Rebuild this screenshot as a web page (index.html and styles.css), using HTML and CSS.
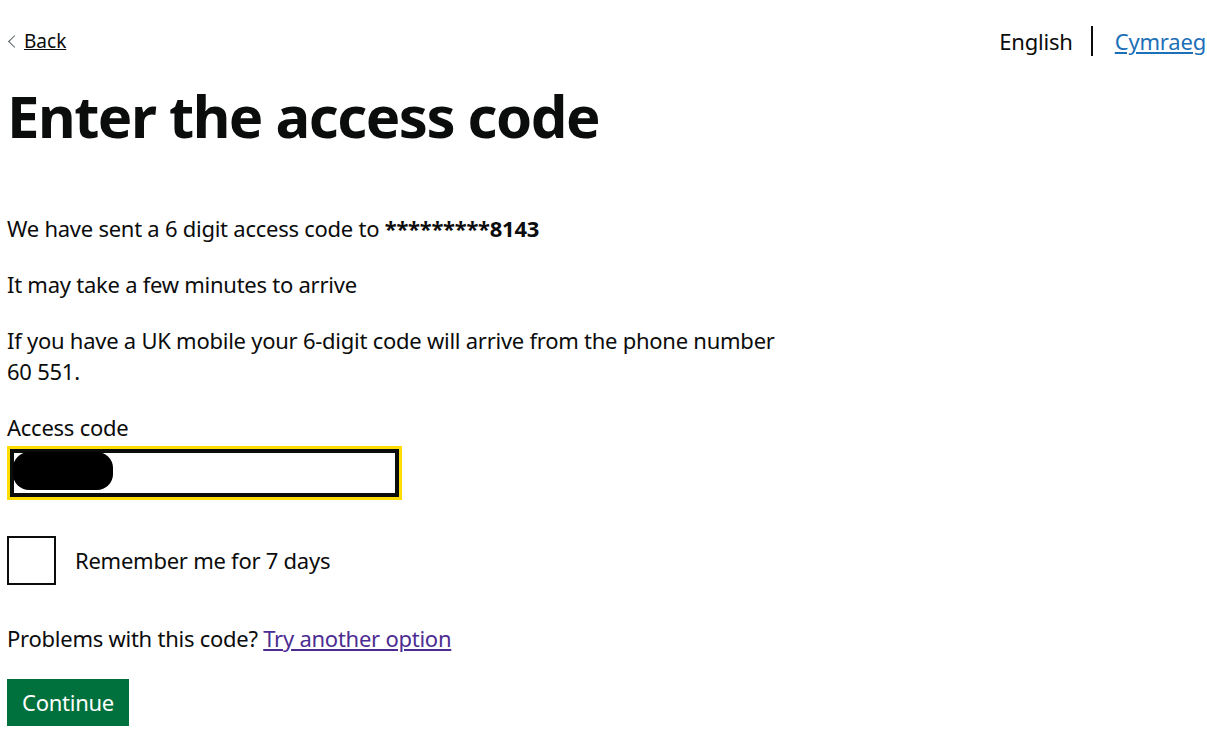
FILE: index.html
```html
<!DOCTYPE html>
<html lang="en">

<head>
    <meta charset="UTF-8">
    <meta name="viewport" content="width=device-width, initial-scale=1.0">
    <title>Enter the access code</title>
    <link rel="stylesheet" href="styles.css">
</head>

<body>
    <div class="page">
        <div class="top-bar">
            <a href="#" class="back-link">Back</a>
            <nav class="language-toggle">
                <ul>
                    <li class="current">English</li>
                    <li><a href="#">Cymraeg</a></li>
                </ul>
            </nav>
        </div>

        <main class="main-column">
            <h1>Enter the access code</h1>

            <p>We have sent a 6 digit access code to <strong>*********8143</strong></p>
            <p>It may take a few minutes to arrive</p>
            <p>If you have a UK mobile your 6-digit code will arrive from the phone number 60 551.</p>

            <form>
                <div class="form-group">
                    <label for="code" class="label">Access code</label>
                    <div class="input-wrap">
                        <span class="redacted"></span>
                        <input type="text" id="code" class="input">
                    </div>
                </div>

                <div class="checkbox">
                    <input type="checkbox" id="remember">
                    <label for="remember">Remember me for 7 days</label>
                </div>

                <p>Problems with this code? <a href="#" class="visited">Try another option</a></p>

                <button type="submit" class="button">Continue</button>
            </form>
        </main>
    </div>
</body>

</html>
```

FILE: styles.css
```css
body {
    font-family: "Noto Sans", Arial, sans-serif;
    color: #0b0c0c;
    margin: 0;
    padding: 0;
    background: #fff;
}

.page {
    padding: 0 1px 0 7px;
}

.top-bar {
    display: flex;
    justify-content: space-between;
    align-items: center;
    padding-top: 24px;
    height: 34px;
}

.back-link {
    position: relative;
    padding-left: 17px;
    font-size: 19px;
    color: #0b0c0c;
}

.back-link::before {
    content: "";
    position: absolute;
    left: 3px;
    top: 50%;
    width: 8px;
    height: 8px;
    margin-top: -4px;
    border-left: 1px solid #505a5f;
    border-bottom: 1px solid #505a5f;
    transform: rotate(45deg);
}

.language-toggle ul {
    list-style: none;
    margin: 0;
    padding: 0;
    display: flex;
    align-items: center;
}

.language-toggle li {
    font-size: 22px;
    line-height: 30px;
    letter-spacing: -0.2px;
    padding: 0 0 0 22px;
}

.language-toggle li.current {
    border-right: 2px solid #0b0c0c;
    padding-right: 18px;
}

.language-toggle a {
    color: #1d70b8;
}

.main-column {
    max-width: 770px;
}

h1 {
    font-size: 58px;
    font-weight: 700;
    line-height: 1.1;
    margin: 26px 0 65px;
    letter-spacing: -1.5px;
}

p {
    font-size: 22px;
    line-height: 31px;
    letter-spacing: -0.25px;
    margin: 0 0 25px;
}

strong {
    font-weight: 700;
}

.form-group {
    margin-bottom: 36px;
}

.label {
    display: block;
    font-size: 22px;
    line-height: 31px;
    letter-spacing: -0.25px;
    margin-bottom: 3px;
}

.input-wrap {
    position: relative;
    width: 395px;
}

.input {
    box-sizing: border-box;
    width: 100%;
    height: 54px;
    border: 3px solid #ffdd00;
    box-shadow: inset 0 0 0 4px #0b0c0c;
    outline: none;
    margin: 0;
    font-size: 22px;
}

.redacted {
    position: absolute;
    left: 6px;
    top: 6px;
    width: 100px;
    height: 38px;
    background: #000;
    border-radius: 16px;
    z-index: 1;
}

.checkbox {
    display: flex;
    align-items: center;
    margin-bottom: 38px;
}

.checkbox input {
    appearance: none;
    width: 49px;
    height: 49px;
    margin: 0 19px 0 0;
    border: 2px solid #0b0c0c;
    box-sizing: border-box;
}

.checkbox label {
    font-size: 22px;
    line-height: 31px;
    letter-spacing: -0.25px;
}

.visited {
    color: #4c2c92;
}

.button {
    background-color: #00703c;
    color: #fff;
    border: none;
    box-shadow: 0 3px 0 #002d18;
    font-family: inherit;
    font-size: 22px;
    letter-spacing: -0.25px;
    padding: 8px 15px 8px;
    line-height: 31px;
    cursor: pointer;
}
```
